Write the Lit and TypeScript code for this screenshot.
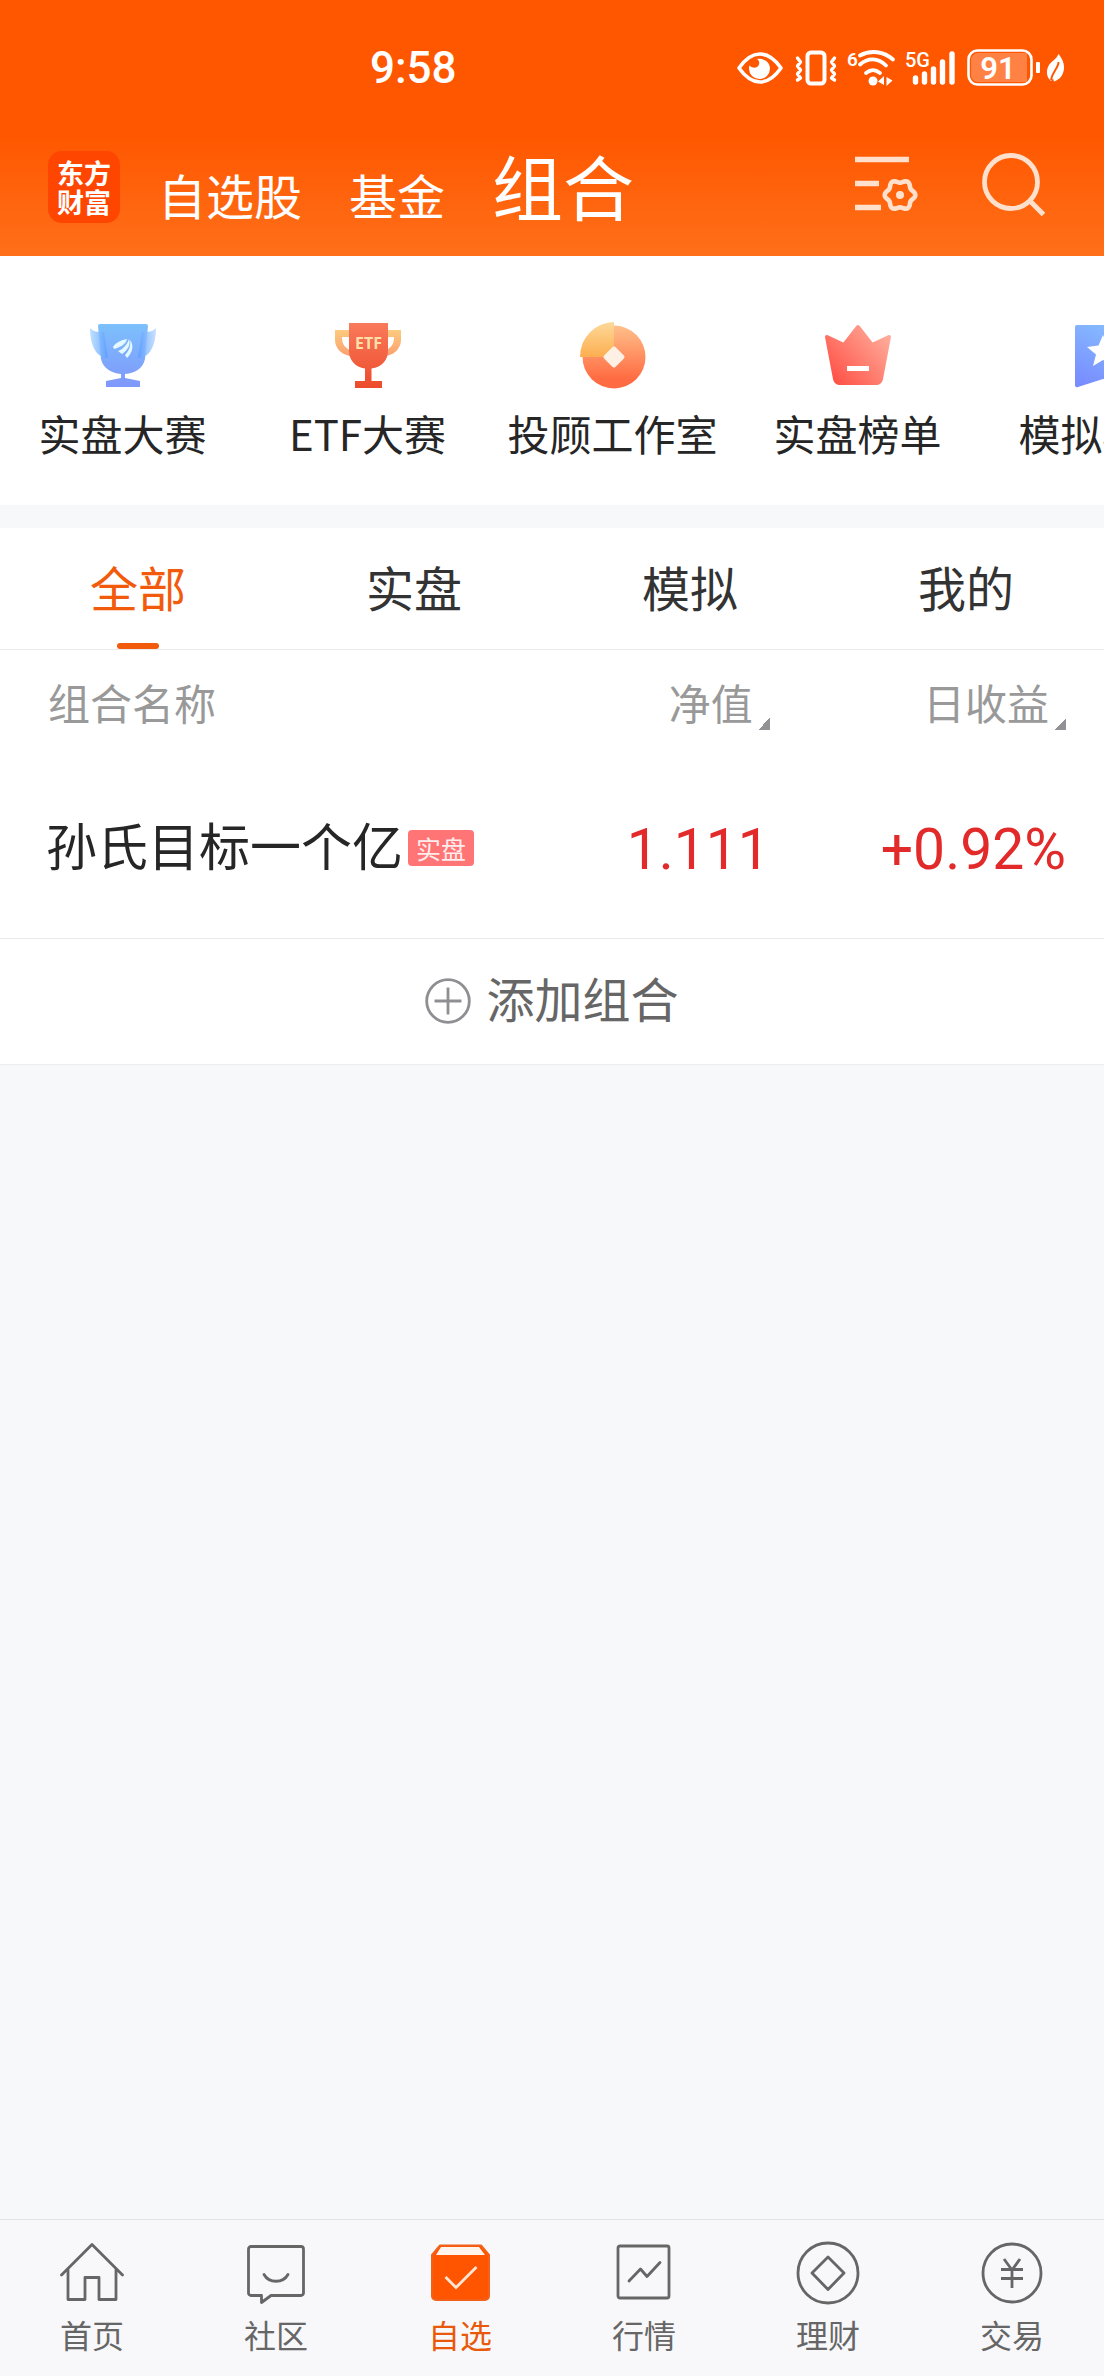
import { LitElement, css, html, svg, nothing, TemplateResult } from "lit";
import { customElement, state } from "lit/decorators.js";
import { classMap } from "lit/directives/class-map.js";

interface Entry {
  label: string;
  icon: TemplateResult;
}

interface Portfolio {
  name: string;
  tag: string;
  netValue: string;
  dayReturn: string;
}

/* Six-lobed gear outline around (cx, cy). */
function gearPath(cx: number, cy: number): string {
  const points: string[] = [];
  for (let i = 0; i < 72; i++) {
    const a = (i * Math.PI) / 36;
    const r = 13.8 + 1.5 * Math.cos(6 * a);
    points.push(`${(cx + r * Math.cos(a)).toFixed(2)} ${(cy + r * Math.sin(a)).toFixed(2)}`);
  }
  return `M${points.join("L")}Z`;
}

const eyeIcon = html`<svg width="51" height="32" viewBox="0 0 51 32" aria-hidden="true">
  <path d="M2 16C9 6 16 2 23 2s14 4 21 14c-7 10-14 14-21 14S9 26 2 16Z" fill="none" stroke="#fff" stroke-width="3.6" stroke-linejoin="round" />
  <path d="M20 7c7-1 13 3 13 9.500a10.500 10.500 0 0 1-21 0c0-1 0-2 .5-3 3 3 7 3 9 0 1.500-2 .8-5-1.500-6.500Z" fill="#fff" />
</svg>`;

const vibrateIcon = html`<svg width="46" height="36" viewBox="0 0 46 36" aria-hidden="true" fill="none" stroke="#fff" stroke-linecap="round" stroke-linejoin="round">
  <rect x="13.500" y="2.500" width="17" height="31" rx="3.500" stroke-width="4" />
  <path d="M3.500 8l3 4-3 4 3 4-3 4 3 4-3 2M40.500 8l-3 4 3 4-3 4 3 4-3 4 3 2" stroke-width="3.400" />
</svg>`;

const wifiIcon = html`<svg width="52" height="38" viewBox="0 0 52 38" aria-hidden="true">
  <g fill="none" stroke="#fff" stroke-width="3.800" stroke-linecap="round">
    <path d="M14 6.500c11-6 24-4 33 4" />
    <path d="M14 15.500c8-7 18-7 26 1" />
    <path d="M20 24c5-4 9-4 14 0" />
  </g>
  <circle cx="27" cy="32" r="4.500" fill="#fff" />
  <path d="M38 27v9l-6-3.500zM40.500 37v-9l6 3.500z" fill="#fff" />
  <text x="1" y="17" fill="#fff" font-size="19" font-weight="600" font-family="Roboto, sans-serif">6</text>
</svg>`;

const signalIcon = html`<svg width="57" height="38" viewBox="0 0 57 38" aria-hidden="true">
  <g stroke="#fff" stroke-width="5.400" stroke-linecap="round">
    <path d="M11.500 29v4M20.500 25v8M29.500 20v13M38.500 13v20M48 5v28" />
  </g>
  <text x="1" y="18" fill="#fff" font-size="20" font-weight="500" font-family="Roboto, sans-serif" stroke="#ff5700" stroke-width="2" paint-order="stroke">5G</text>
</svg>`;

const batteryIcon = html`<svg width="73" height="38" viewBox="0 0 73 38" aria-hidden="true">
  <rect x="1.500" y="1.500" width="63" height="34" rx="9" fill="none" stroke="#fff" stroke-width="2.600" />
  <path d="M11 4h49v29H11a7 7 0 0 1-7-7V11a7 7 0 0 1 7-7Z" fill="#ff8244" />
  <rect x="69" y="13" width="4" height="11" rx="1" fill="#fff" />
  <text x="31" y="30" text-anchor="middle" fill="#fff" font-size="31" font-weight="600" font-family="Roboto, sans-serif">91</text>
</svg>`;

const leafIcon = html`<svg width="20" height="30" viewBox="0 0 20 30" aria-hidden="true">
  <path d="M12.500 1c5 6 7 13 4.500 19-1.500 4.500-5 7-9 8.500l-1-3L5 28C0 24 0 17 3 12c2.500-4 7-5 9.500-11Z" fill="#fff" />
  <path d="M12.500 9c0 6-6 9-7.500 18" fill="none" stroke="#ff5700" stroke-width="2" />
</svg>`;

const settingsIcon = html`<svg width="64" height="60" viewBox="0 0 64 60" aria-hidden="true">
  <path d="M0 5.500h54M0 29.500h24M0 53.500h26" stroke="#ffe0cc" stroke-width="5.400" />
  <path d=${gearPath(45, 41)} fill="none" stroke="#ffe0cc" stroke-width="4.600" stroke-linejoin="round" />
  <circle cx="45" cy="41" r="4" fill="#ffe0cc" />
</svg>`;

const searchIcon = html`<svg width="64" height="64" viewBox="0 0 64 64" aria-hidden="true" fill="none" stroke="#ffe0cc">
  <circle cx="29" cy="30" r="26.500" stroke-width="4.800" />
  <path d="M47.500 48.500l14 14" stroke-width="5" />
</svg>`;

const blueTrophy = html`<svg width="72" height="72" viewBox="0 0 72 72" aria-hidden="true">
  <defs>
    <linearGradient id="cup-a" x1="0" y1="0" x2="0" y2="1">
      <stop offset="0" stop-color="#7cc0fc" /><stop offset="1" stop-color="#7f97fc" />
    </linearGradient>
    <linearGradient id="wing-l"><stop offset="0" stop-color="#b3dcfd" /><stop offset="1" stop-color="#5a9dff" /></linearGradient>
    <linearGradient id="wing-r"><stop offset="0" stop-color="#5a9dff" /><stop offset="1" stop-color="#c0dcfe" /></linearGradient>
  </defs>
  <path d="M13 4h46a2 2 0 0 1 2 2l-3 33c-2 9-9 14-20 15v4l15 3v6H19v-6l15-3v-4C24 53 16 48 14 39L11 6a2 2 0 0 1 2-2Z" fill="url(#cup-a)" />
  <path d="M3 8c3 3 6 4 10 4l4 0 4 26c-5 0-8-2-11-5C5 27 3 18 3 8Z" fill="url(#wing-l)" fill-opacity=".85" />
  <path d="M69 8c-3 3-6 4-10 4h-4l-4 26c5 0 8-2 11-5 5-6 7-15 7-25Z" fill="url(#wing-r)" fill-opacity=".85" />
  <path d="M26 27c2-4 8-7 14-8-1 5-6 8-13 10ZM31 31c5-2 9-6 11-12 2 5-1 11-7 15ZM38 35c4-4 6-9 5-15 4 5 3 12-3 18Z" fill="#e4f8ff" />
</svg>`;

const etfTrophy = html`<svg width="72" height="72" viewBox="0 0 72 72" aria-hidden="true">
  <defs>
    <linearGradient id="etf-a" x1="0" y1="0" x2="0" y2="1">
      <stop offset="0" stop-color="#f97a5b" /><stop offset="1" stop-color="#ec4b2b" />
    </linearGradient>
    <linearGradient id="etf-b" x1="0" y1="0" x2="0" y2="1">
      <stop offset="0" stop-color="#fdcb7e" /><stop offset="1" stop-color="#fb9f70" />
    </linearGradient>
  </defs>
  <path d="M3 10h16v7h-9c0 7 3 11 8 13v6C8 34 3 27 3 20ZM69 10H53v7h9c0 7-3 11-8 13v6c10-2 15-9 15-16Z" fill="url(#etf-b)" />
  <path d="M17 3h39v28c0 9-6 16-16.500 17.500V61H50v7H23v-7h10V48.500C23 47 17 40 17 31Z" fill="url(#etf-a)" />
  <text x="36.500" y="29" text-anchor="middle" font-size="16" font-weight="700" font-family="Open Sans, sans-serif" fill="#ffdfa8">ETF</text>
</svg>`;

const coinIcon = html`<svg width="72" height="72" viewBox="0 0 72 72" aria-hidden="true">
  <defs>
    <linearGradient id="coin-a" x1="0" y1="0" x2="0" y2="1">
      <stop offset="0" stop-color="#ffc08a" /><stop offset=".85" stop-color="#ff6b42" />
    </linearGradient>
    <linearGradient id="coin-b" x1="0" y1="0" x2="0" y2="1">
      <stop offset="0" stop-color="#fdd999" /><stop offset="1" stop-color="#fdae50" />
    </linearGradient>
  </defs>
  <circle cx="37" cy="37" r="31.500" fill="url(#coin-a)" />
  <path d="M37 37H3A34 35 0 0 1 37 2Z" fill="url(#coin-b)" />
  <rect x="29" y="29" width="16" height="16" rx="2" transform="rotate(45 37 37)" fill="#fff0e6" />
</svg>`;

const crownIcon = html`<svg width="72" height="72" viewBox="0 0 72 72" aria-hidden="true">
  <defs>
    <linearGradient id="crown-a" x1="0" y1="1" x2="1" y2="0.200">
      <stop offset="0" stop-color="#ff4a3f" /><stop offset="1" stop-color="#ffab9a" />
    </linearGradient>
  </defs>
  <path d="M5 17l17 8L36 7l14 18 17-8-8 42a5 5 0 0 1-4 4H17a5 5 0 0 1-4-4Z" fill="url(#crown-a)" stroke="url(#crown-a)" stroke-width="4" stroke-linejoin="round" />
  <rect x="25" y="46" width="22" height="5" fill="#fff" />
</svg>`;

const flagIcon = html`<svg width="72" height="72" viewBox="0 0 72 72" aria-hidden="true">
  <defs>
    <linearGradient id="flag-a" x1="0.200" y1="1" x2="0.600" y2="0">
      <stop offset="0" stop-color="#788cff" /><stop offset="1" stop-color="#86bbff" />
    </linearGradient>
  </defs>
  <path d="M10 5h52a2 2 0 0 1 2 2v58a2 2 0 0 1-3 2L36 59l-25 8a2 2 0 0 1-3-2V7a2 2 0 0 1 2-2Z" fill="url(#flag-a)" />
  <path d="M36 15l4.500 10.500L52 27l-9 7.500L46 46l-10-6-10 6 3-11.500L20 27l11.500-1.500Z" fill="#fff" />
</svg>`;

const plusIcon = html`<svg width="46" height="46" viewBox="0 0 46 46" aria-hidden="true" fill="none" stroke="#8f8f93" stroke-width="2.800">
  <circle cx="23" cy="23" r="21.300" />
  <path d="M9.500 23h27M23 9.500v27" />
</svg>`;

const navIcon = (body: TemplateResult) => html`<svg width="66" height="66" viewBox="0 0 66 66" aria-hidden="true"
  fill="none" stroke="#666" stroke-width="2.800" stroke-linejoin="round" stroke-linecap="round">${body}</svg>`;

const NAV: Entry[] = [
  { label: "首页", icon: navIcon(svg`<path d="M2.500 34L33 3.500 63.500 34M9 28.500V58.500H26V36.500H40V58.500H57V28.500" />`) },
  { label: "社区", icon: navIcon(svg`<path d="M8 5.500H58a2.500 2.500 0 0 1 2.500 2.500V52a2.500 2.500 0 0 1-2.500 2.500H28L18.500 61.500V54.500H8A2.500 2.500 0 0 1 5.500 52V8A2.500 2.500 0 0 1 8 5.500Z" /><path d="M21 33.500c5 9 19 9 24 0" />`) },
  { label: "自选", icon: navIcon(svg`<path d="M5 14L13 4.500H54L62 14V55a4 4 0 0 1-4 4H9a4 4 0 0 1-4-4Z" fill="#ff5500" stroke="#f2611a" stroke-width="2" /><path d="M14 6H52L58 14H9Z" fill="#fff5ec" stroke="none" /><path d="M18.500 36L29 46.500 49.500 26" stroke="#ffe6d2" stroke-linecap="butt" stroke-linejoin="miter" />`) },
  { label: "行情", icon: navIcon(svg`<rect x="7" y="5" width="51" height="52" rx="2" /><path d="M18 40L29.500 28 36 35.500 49 21.500" />`) },
  { label: "理财", icon: navIcon(svg`<circle cx="33" cy="32" r="30" /><path d="M33 16L49 32 33 48.500 17 32Z" />`) },
  { label: "交易", icon: navIcon(svg`<circle cx="33" cy="32" r="29" /><path d="M25 18l8 11 8-11M33 29v18M22 28.500h22M22 37.500h22" stroke-linecap="butt" />`) },
];

const QUICK: Entry[] = [
  { label: "实盘大赛", icon: blueTrophy },
  { label: "ETF大赛", icon: etfTrophy },
  { label: "投顾工作室", icon: coinIcon },
  { label: "实盘榜单", icon: crownIcon },
  { label: "模拟榜单", icon: flagIcon },
];

const SECTIONS = ["自选股", "基金", "组合"];
const TABS = ["全部", "实盘", "模拟", "我的"];
const PORTFOLIOS: Portfolio[] = [
  { name: "孙氏目标一个亿", tag: "实盘", netValue: "1.111", dayReturn: "+0.92%" },
];

@customElement("app-root")
export class AppRoot extends LitElement {
  @state() private tab = 0;

  static styles = css`
    :host {
      display: flex;
      flex-direction: column;
      min-height: 100vh;
      overflow-x: hidden;
      background: #f7f8fa;
      color: #262626;
      font-family: "Noto Sans CJK SC", sans-serif;
      font-size: 42px;
      line-height: 56px;
    }
    * { box-sizing: border-box; }
    svg { display: block; flex: none; }
    button {
      margin: 0;
      padding: 0;
      border: 0;
      background: none;
      color: inherit;
      font: inherit;
      cursor: pointer;
    }
    a { color: inherit; text-decoration: none; }

    .top {
      display: flex;
      flex-direction: column;
      height: 256px;
      color: #fff;
      background: linear-gradient(#ff5700 52%, #ff6f19);
    }
    .status {
      display: flex;
      align-items: center;
      justify-content: space-between;
      padding: 40px 38px 0 370px;
    }
    .clock {
      font-family: Roboto, sans-serif;
      font-size: 44px;
      font-weight: 500;
    }
    .indicators { display: flex; align-items: center; gap: 6px; }
    .bar {
      display: flex;
      align-items: flex-start;
      padding: 52px 58px 0 48px;
    }
    .logo {
      display: grid;
      place-content: center;
      width: 72px;
      height: 72px;
      margin-top: 3px;
      border-radius: 14px;
      background: #ff4600;
      font-size: 27px;
      font-weight: 700;
      line-height: 29px;
      text-align: center;
    }
    .sections {
      display: flex;
      flex: 1;
      align-items: baseline;
      gap: 47px;
      padding-left: 38px;
      font-size: 48px;
      line-height: 72px;
      white-space: nowrap;
    }
    .section.current { font-size: 71px; }
    .tools {
      display: flex;
      align-items: center;
      gap: 63px;
      padding-top: 4px;
    }

    .quick {
      display: flex;
      height: 249px;
      padding-top: 64px;
      overflow: hidden;
      background: #fff;
    }
    .entry {
      display: flex;
      flex: none;
      flex-direction: column;
      align-items: center;
      gap: 13px;
      width: 245px;
      white-space: nowrap;
    }

    .tabs {
      display: flex;
      height: 122px;
      margin-top: 23px;
      border-bottom: 1px solid #ebebeb;
      background: #fff;
      font-size: 48px;
      color: #333;
    }
    .tab {
      display: flex;
      flex: 1;
      flex-direction: column;
      align-items: center;
      justify-content: space-between;
      padding-top: 30px;
    }
    .tab.active { color: #f25a0c; }
    .tab.active::after {
      content: "";
      width: 42px;
      height: 6px;
      border-radius: 3px;
      background: #f25a0c;
    }

    .list {
      width: 100%;
      border-collapse: collapse;
      table-layout: fixed;
      background: #fff;
    }
    .list th, .list td { padding: 0 38px 0 0; font-weight: 400; text-align: right; }
    .list .name-col { padding: 0 0 0 46px; text-align: left; white-space: nowrap; }
    .list .value-col { width: 26%; padding-right: 3px; }
    .list .return-col { width: 30%; }
    .list .head th { height: 108px; padding-bottom: 4px; color: #999; }
    .list .head .name-col { padding-left: 48px; }
    .sort { display: inline-flex; align-items: flex-end; gap: 5px; vertical-align: top; }
    .sort::after {
      content: "";
      width: 12px;
      height: 12px;
      background: linear-gradient(135deg, transparent 50%, #919196 50%);
    }
    .row td {
      height: 180px;
      border-bottom: 1px solid #ebebeb;
    }
    .holding { display: flex; align-items: center; gap: 5px; }
    .name { padding-bottom: 8px; font-size: 51px; }
    .tag {
      width: 66px;
      border-radius: 4px;
      background: #ff7575;
      color: #ffecec;
      font-size: 25px;
      line-height: 36px;
      text-align: center;
    }
    .list .figure {
      padding-top: 4px;
      color: #e22a2a;
      font-family: Roboto, sans-serif;
      font-size: 57px;
    }

    .add {
      display: flex;
      align-items: center;
      justify-content: center;
      gap: 15px;
      height: 126px;
      border-bottom: 1px solid #ebedee;
      background: #fff;
      color: #666;
      font-size: 48px;
    }
    .add-label { padding-bottom: 8px; }

    .nav {
      display: flex;
      height: 157px;
      margin-top: auto;
      border-top: 1px solid #e1e3e6;
      background: #f8f8fb;
      color: #666;
      font-size: 32px;
      line-height: 44px;
    }
    .nav-item {
      display: flex;
      flex: 1;
      flex-direction: column;
      align-items: center;
      gap: 5px;
      padding-top: 21px;
    }
    .nav-item.current { color: #e8590c; }
  `;

  private renderRow(p: Portfolio) {
    return html`<tr class="row">
      <td class="name-col"><div class="holding"><span class="name">${p.name}</span><span class="tag">${p.tag}</span></div></td>
      <td class="value-col figure">${p.netValue}</td>
      <td class="return-col figure">${p.dayReturn}</td>
    </tr>`;
  }

  render() {
    return html`
      <header class="top">
        <div class="status">
          <time class="clock">9:58</time>
          <div class="indicators">${eyeIcon}${vibrateIcon}${wifiIcon}${signalIcon}${batteryIcon}${leafIcon}</div>
        </div>
        <div class="bar">
          <a class="logo" href="#home"><span>东方<br />财富</span></a>
          <nav class="sections">
            ${SECTIONS.map((s, i) => html`<a href="#section-${i}" class=${classMap({ section: true, current: i === 2 })}
              aria-current=${i === 2 ? "page" : nothing}>${s}</a>`)}
          </nav>
          <div class="tools">
            <button type="button" aria-label="设置">${settingsIcon}</button>
            <button type="button" aria-label="搜索">${searchIcon}</button>
          </div>
        </div>
      </header>

      <nav class="quick">
        ${QUICK.map((q, i) => html`<a class="entry" href="#quick-${i}">${q.icon}<span>${q.label}</span></a>`)}
      </nav>

      <div class="tabs" role="tablist">
        ${TABS.map((t, i) => html`<button type="button" role="tab" aria-selected=${i === this.tab ? "true" : "false"}
          class=${classMap({ tab: true, active: i === this.tab })} @click=${() => (this.tab = i)}><span>${t}</span></button>`)}
      </div>

      <table class="list">
        <thead>
          <tr class="head">
            <th class="name-col" scope="col">组合名称</th>
            <th class="value-col" scope="col"><button type="button" class="sort">净值</button></th>
            <th class="return-col" scope="col"><button type="button" class="sort">日收益</button></th>
          </tr>
        </thead>
        <tbody>${PORTFOLIOS.map((p) => this.renderRow(p))}</tbody>
      </table>
      <button type="button" class="add">${plusIcon}<span class="add-label">添加组合</span></button>

      <nav class="nav">
        ${NAV.map((n, i) => html`<a href="#nav-${i}" class=${classMap({ "nav-item": true, current: i === 2 })}
          aria-current=${i === 2 ? "page" : nothing}>${n.icon}<span>${n.label}</span></a>`)}
      </nav>
    `;
  }
}
